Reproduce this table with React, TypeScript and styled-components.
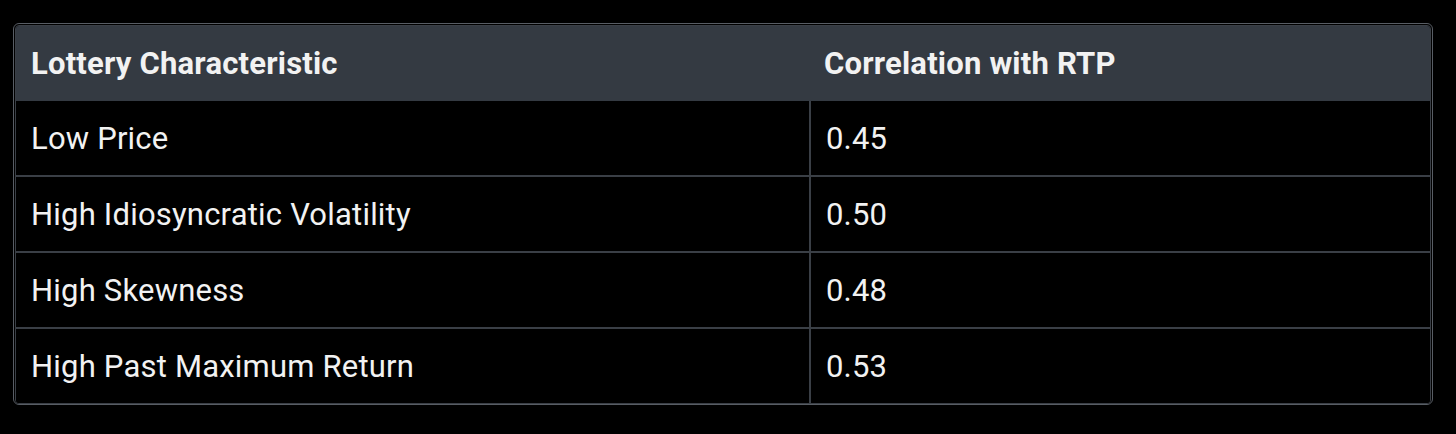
import React from "react";
import styled, { createGlobalStyle } from "styled-components";

const GlobalStyle = createGlobalStyle`
  html, body {
    margin: 0;
    padding: 0;
    background: #000000;
  }
`;

const Page = styled.div`
  width: 1456px;
  height: 434px;
  padding: 23px 0 0 13px;
  box-sizing: border-box;
  background: #000000;
`;

const Frame = styled.div`
  width: 1420px;
  box-sizing: border-box;
  border: 1px solid #585d64;
  border-radius: 6px;
  padding: 1px 1px 0;
`;

const Table = styled.table`
  width: 100%;
  border-collapse: separate;
  border-spacing: 0;
  border: 1px solid #3a3f46;
  border-radius: 4px;
  overflow: hidden;
  font-family: Roboto, "Liberation Sans", sans-serif;
  color: #f2f2f2;
  table-layout: fixed;
`;

const HeadCell = styled.th<{ $last?: boolean }>`
  background: #343a42;
  height: 75px;
  padding: 0 15px;
  text-align: left;
  font-size: 31px;
  font-weight: 700;
  letter-spacing: 0.2px;
  box-sizing: border-box;
  width: ${(p) => (p.$last ? "auto" : "793px")};
`;

const Row = styled.tr`
  & + & > td {
    border-top: 2px solid #3a3f46;
    height: 76px;
  }
`;

const Cell = styled.td<{ $last?: boolean }>`
  background: #000000;
  height: 74px;
  padding: 0 15px;
  font-size: 31px;
  font-weight: 400;
  letter-spacing: 0.2px;
  box-sizing: border-box;
  border-left: ${(p) => (p.$last ? "2px solid #3a3f46" : "none")};
`;

const rows: [string, string][] = [
  ["Low Price", "0.45"],
  ["High Idiosyncratic Volatility", "0.50"],
  ["High Skewness", "0.48"],
  ["High Past Maximum Return", "0.53"],
];

export default function App() {
  return (
    <Page>
      <GlobalStyle />
      <Frame>
        <Table>
          <thead>
            <tr>
              <HeadCell>Lottery Characteristic</HeadCell>
              <HeadCell $last>Correlation with RTP</HeadCell>
            </tr>
          </thead>
          <tbody>
            {rows.map(([name, value]) => (
              <Row key={name}>
                <Cell>{name}</Cell>
                <Cell $last>{value}</Cell>
              </Row>
            ))}
          </tbody>
        </Table>
      </Frame>
    </Page>
  );
}
